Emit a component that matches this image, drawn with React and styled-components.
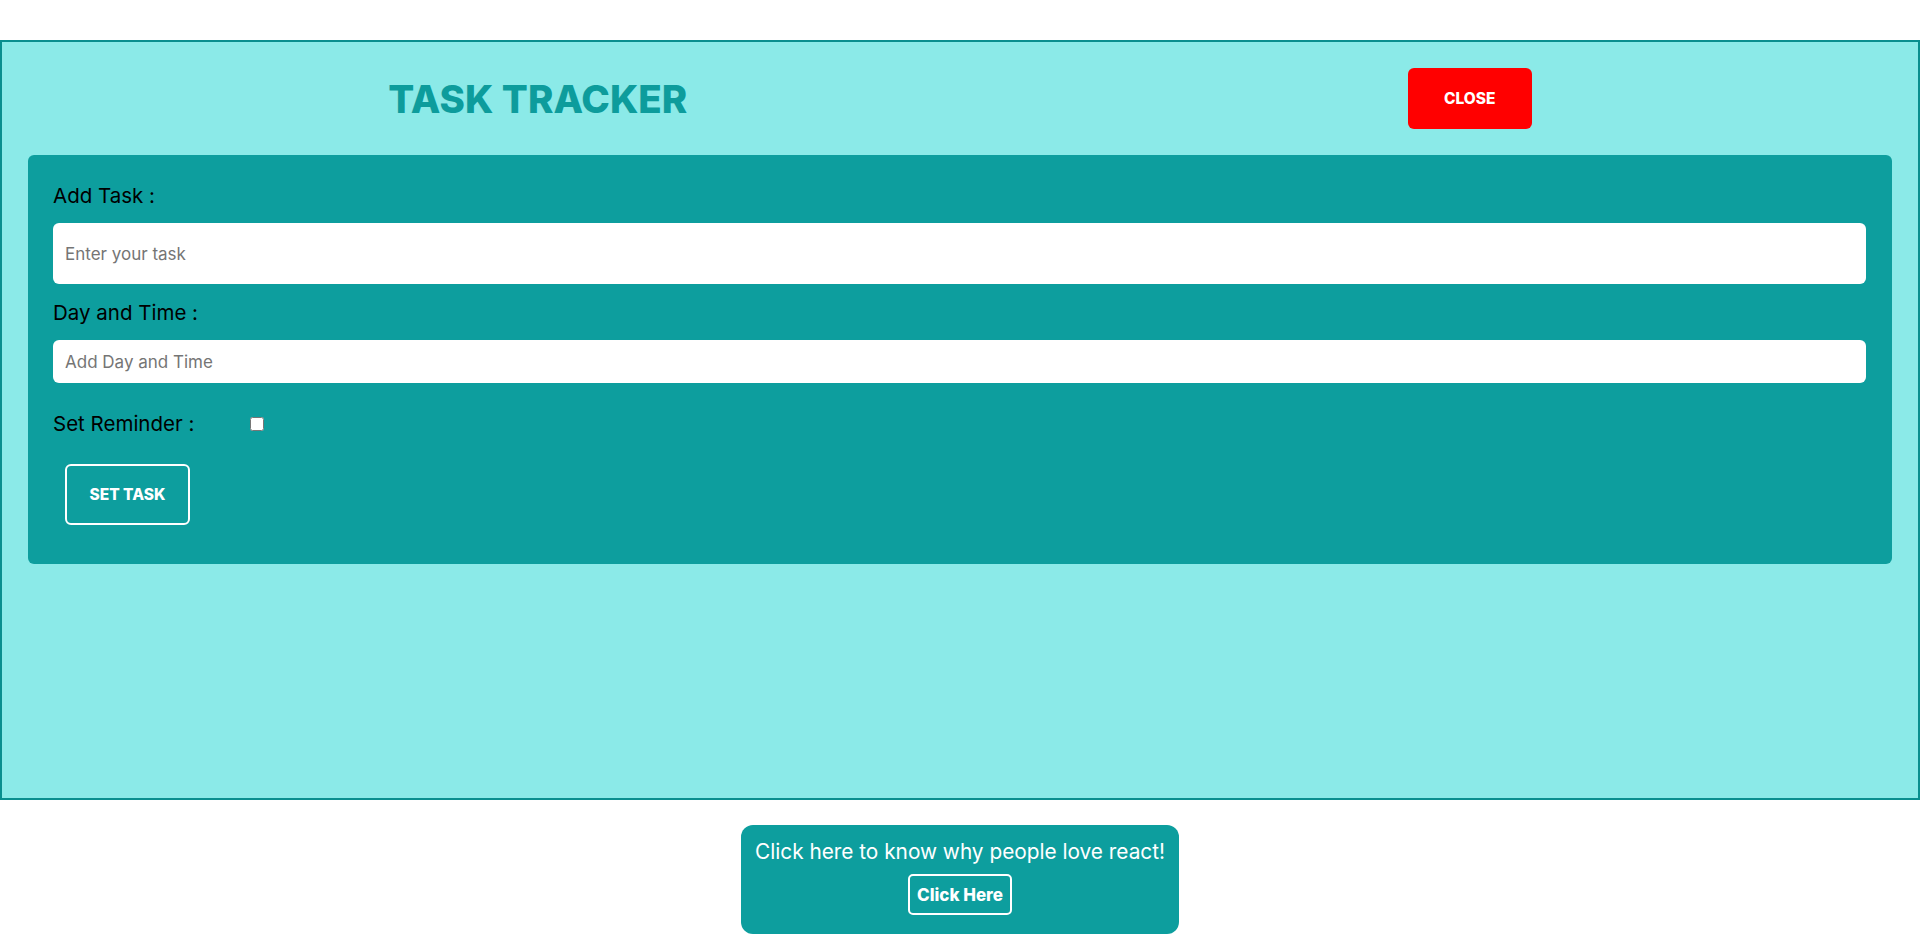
import React from 'react';
import styled, { createGlobalStyle } from 'styled-components';

const GlobalStyle = createGlobalStyle`
  body {
    margin: 0;
    background: #ffffff;
    font-family: Inter, "Open Sans", sans-serif;
  }
`;

const Page = styled.div`
  padding-top: 40px;
`;

const Tracker = styled.section`
  box-sizing: border-box;
  height: 760px;
  border: 2px solid #0a8f8f;
  background: #8beae8;
  padding: 0 26px;
`;

const Header = styled.header`
  display: flex;
  justify-content: space-around;
  align-items: center;
  height: 113px;
`;

const Title = styled.h1`
  margin: 0;
  font-size: 38.5px;
  font-weight: 800;
  color: #0d9c9c;
`;

const CloseButton = styled.button`
  width: 124px;
  height: 61px;
  border: none;
  border-radius: 6px;
  background: #ff0000;
  color: #ffffff;
  font-family: inherit;
  font-size: 15.5px;
  font-weight: 800;
  cursor: pointer;
`;

const TaskForm = styled.form`
  display: flex;
  flex-direction: column;
  align-items: flex-start;
  background: #0d9e9e;
  border-radius: 6px;
  padding: 27px 26px 39px 25px;
`;

const Field = styled.div`
  display: flex;
  flex-direction: column;
  gap: 13px;
  width: 100%;
  margin-bottom: 15px;
`;

const Label = styled.label`
  font-size: 20.5px;
  line-height: 28px;
  color: #000000;
`;

const TextInput = styled.input`
  box-sizing: border-box;
  width: 100%;
  height: ${({ $tall }) => ($tall ? '61px' : '43px')};
  border: none;
  border-radius: 6px;
  padding: 0 12px;
  font-family: inherit;
  font-size: 17px;
  outline: none;

  &::placeholder {
    color: #757575;
  }
`;

const ReminderRow = styled.div`
  display: flex;
  align-items: center;
  margin-top: 12px;
`;

const ReminderLabel = styled(Label)`
  width: 197px;
`;

const Checkbox = styled.input`
  width: 14px;
  height: 14px;
  margin: 0;
`;

const SubmitButton = styled.button`
  width: 125px;
  height: 61px;
  margin: 26px 0 0 12px;
  border: 2px solid #ffffff;
  border-radius: 6px;
  background: transparent;
  color: #ffffff;
  font-family: inherit;
  font-size: 15.5px;
  font-weight: 800;
  cursor: pointer;
`;

const PromoCard = styled.div`
  display: flex;
  flex-direction: column;
  align-items: center;
  gap: 7px;
  width: 438px;
  margin: 25px auto 0;
  padding: 12px 0 19px;
  border-radius: 12px;
  background: #0d9e9e;
  color: #ffffff;
`;

const PromoText = styled.p`
  margin: 0;
  font-size: 20.8px;
  line-height: 30px;
`;

const PromoButton = styled.button`
  height: 41px;
  padding: 0 7px;
  border: 2px solid #ffffff;
  border-radius: 5px;
  background: transparent;
  color: #ffffff;
  font-family: inherit;
  font-size: 17px;
  font-weight: 800;
  cursor: pointer;
`;

const App = () => (
  <Page>
    <GlobalStyle />
    <Tracker>
      <Header>
        <Title>TASK TRACKER</Title>
        <CloseButton type="button">CLOSE</CloseButton>
      </Header>
      <TaskForm onSubmit={(e) => e.preventDefault()}>
        <Field>
          <Label>Add Task :</Label>
          <TextInput $tall placeholder="Enter your task" />
        </Field>
        <Field>
          <Label>Day and Time :</Label>
          <TextInput placeholder="Add Day and Time" />
        </Field>
        <ReminderRow>
          <ReminderLabel>Set Reminder :</ReminderLabel>
          <Checkbox type="checkbox" />
        </ReminderRow>
        <SubmitButton type="submit">SET TASK</SubmitButton>
      </TaskForm>
    </Tracker>
    <PromoCard>
      <PromoText>Click here to know why people love react!</PromoText>
      <PromoButton type="button">Click Here</PromoButton>
    </PromoCard>
  </Page>
);

export default App;
